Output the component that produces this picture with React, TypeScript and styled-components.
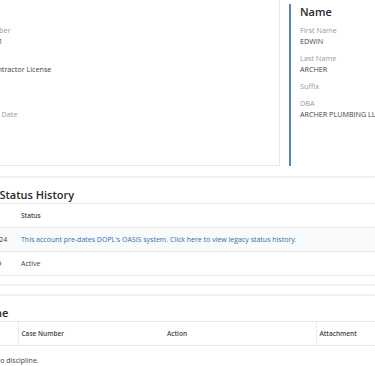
import { FC } from "react";
import styled, { createGlobalStyle } from "styled-components";

const GlobalStyle = createGlobalStyle`
    html, body {
        margin: 0;
        padding: 0;
        background: #fff;
        overflow: hidden;
    }
    body {
        font-family: "Open Sans", "Noto Sans", sans-serif;
        color: #333;
    }
`;

const StyledPage = styled.div`
    width: 470px;
    margin-left: -46px;
`;

const StyledTopGrid = styled.div`
    display: grid;
    grid-template-columns: 326px 1fr;
    column-gap: 9px;
    height: 166px;
`;

const StyledLeftPanel = styled.div`
    border-right: 1px solid #e8e8e8;
    border-bottom: 1px solid #e8e8e8;
    padding-top: 4px;
    padding-left: 1px;
`;

const StyledRightPanel = styled.div`
    margin-top: 4px;
    border-left: 2px solid #5a86b4;
    padding-left: 9px;
`;

const StyledPanelTitle = styled.div<{ $hidden?: boolean }>`
    font-size: 11px;
    font-weight: 600;
    line-height: 16px;
    color: #2a2a2a;
    margin-bottom: 4.5px;
    visibility: ${(p) => (p.$hidden ? "hidden" : "visible")};
`;

const StyledField = styled.div`
    margin-bottom: 6px;
`;

const StyledLabel = styled.div`
    font-size: 7.3px;
    line-height: 11px;
    color: #9a9a9a;
    white-space: nowrap;
`;

const StyledValue = styled.div`
    font-size: 7.2px;
    line-height: 11px;
    color: #444;
    white-space: nowrap;
`;

const StyledDivider = styled.div<{ $gap: number }>`
    margin-top: ${(p) => p.$gap}px;
    border-top: 2px solid #efefef;
`;

const StyledSectionTitle = styled.div`
    margin-top: 9px;
    padding-left: 3px;
    font-size: 11px;
    font-weight: 600;
    line-height: 16px;
    color: #2a2a2a;
    white-space: nowrap;
`;

const StyledTable = styled.table`
    width: 100%;
    border-collapse: collapse;
    table-layout: fixed;
    font-size: 7px;
`;

const StyledTh = styled.th<{ $w?: number; $sep?: boolean }>`
    box-sizing: border-box;
    width: ${(p) => (p.$w ? `${p.$w}px` : "auto")};
    height: 24px;
    padding: 0 3px;
    text-align: left;
    font-weight: 600;
    font-size: 6.5px;
    color: #444;
    white-space: nowrap;
    border-top: 1px solid #e8e8e8;
    border-bottom: 1px solid #e8e8e8;
    border-left: ${(p) => (p.$sep ? "1px solid #ececec" : "none")};
`;

const StyledTr = styled.tr<{ $striped?: boolean }>`
    background: ${(p) => (p.$striped ? "#f8fafc" : "#fff")};
`;

const StyledTd = styled.td<{ $indent?: number; $tall?: boolean }>`
    box-sizing: border-box;
    height: ${(p) => (p.$tall ? 26 : 24)}px;
    padding: ${(p) => (p.$tall ? 4 : 0)}px 3px 0 ${(p) => p.$indent ?? 3}px;
    border-bottom: 1px solid #e8e8e8;
    color: #444;
    white-space: nowrap;
`;

const StyledLink = styled.a`
    color: #2f6fb3;
    text-decoration: none;
`;

interface IField {
    label: string;
    value: string;
}

const licenseFields: IField[] = [
    { label: "License Number", value: "5581247-5501" },
    { label: "License Type", value: "Plumbing Contractor License" },
    { label: "Status", value: "Active" },
    { label: "Last Renewal Date", value: "" },
];

const nameFields: IField[] = [
    { label: "First Name", value: "EDWIN" },
    { label: "Last Name", value: "ARCHER" },
    { label: "Suffix", value: "" },
    { label: "DBA", value: "ARCHER PLUMBING LLC" },
];

const FieldList: FC<{ fields: IField[] }> = ({ fields }) => (
    <>
        {fields.map((f) => (
            <StyledField key={f.label}>
                <StyledLabel>{f.label}</StyledLabel>
                {f.value && <StyledValue>{f.value}</StyledValue>}
            </StyledField>
        ))}
    </>
);

const App: FC = () => {
    return (
        <>
            <GlobalStyle />
            <StyledPage>
                <StyledTopGrid>
                    <StyledLeftPanel>
                        <StyledPanelTitle $hidden>License</StyledPanelTitle>
                        <FieldList fields={licenseFields} />
                    </StyledLeftPanel>
                    <StyledRightPanel>
                        <StyledPanelTitle>Name</StyledPanelTitle>
                        <FieldList fields={nameFields} />
                    </StyledRightPanel>
                </StyledTopGrid>

                <StyledDivider $gap={10} />
                <StyledSectionTitle>License Status History</StyledSectionTitle>
                <StyledTable>
                    <thead>
                        <tr>
                            <StyledTh $w={64}>Date</StyledTh>
                            <StyledTh>Status</StyledTh>
                        </tr>
                    </thead>
                    <tbody>
                        <StyledTr $striped>
                            <StyledTd $indent={16}>12/13/2024</StyledTd>
                            <StyledTd>
                                <StyledLink href="#">
                                    This account pre-dates DOPL's OASIS system. Click here to view legacy status history.
                                </StyledLink>
                            </StyledTd>
                        </StyledTr>
                        <StyledTr>
                            <StyledTd $indent={14}>1/13/2019</StyledTd>
                            <StyledTd>Active</StyledTd>
                        </StyledTr>
                    </tbody>
                </StyledTable>

                <StyledDivider $gap={8} />
                <StyledDivider $gap={8} />
                <StyledSectionTitle>Discipline</StyledSectionTitle>
                <StyledTable>
                    <thead>
                        <tr>
                            <StyledTh $w={64}>Date</StyledTh>
                            <StyledTh $w={146} $sep>Case Number</StyledTh>
                            <StyledTh $w={152}>Action</StyledTh>
                            <StyledTh $sep>Attachment</StyledTh>
                        </tr>
                    </thead>
                    <tbody>
                        <StyledTr>
                            <StyledTd colSpan={4} $indent={41} $tall>No discipline.</StyledTd>
                        </StyledTr>
                    </tbody>
                </StyledTable>
            </StyledPage>
        </>
    );
};

export default App;
